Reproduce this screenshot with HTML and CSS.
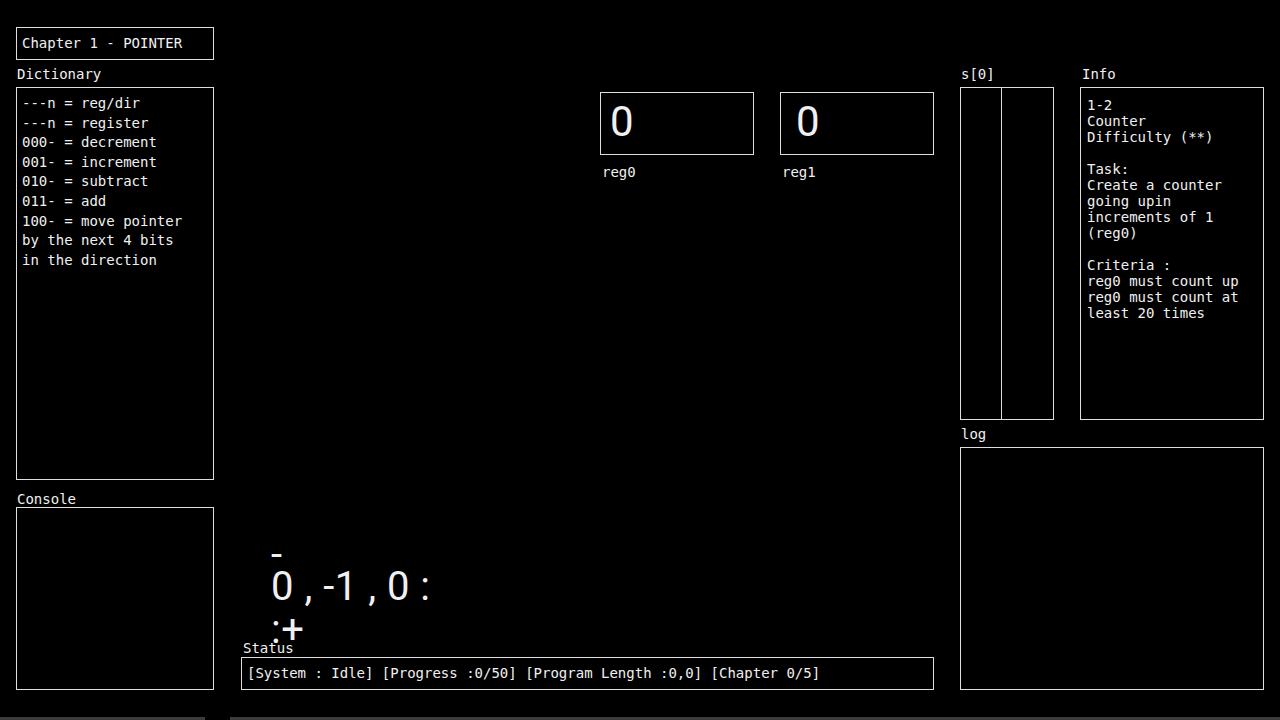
FILE: index.html
```html
<!DOCTYPE html>
<html>
<head>
<meta charset="utf-8">
<title>Chapter 1 - POINTER</title>
<link rel="stylesheet" href="styles.css">
</head>
<body>
<div class="screen">
  <div class="main">
    <section class="col col-left">
      <div class="box chapter">Chapter 1 - POINTER</div>
      <div class="label label-top">Dictionary</div>
      <div class="box dict">
        <div>---n = reg/dir</div>
        <div>---n = register</div>
        <div>000- = decrement</div>
        <div>001- = increment</div>
        <div>010- = subtract</div>
        <div>011- = add</div>
        <div>100- = move pointer</div>
        <div>by the next 4 bits</div>
        <div>in the direction</div>
      </div>
      <div class="label label-console">Console</div>
      <div class="box console"></div>
    </section>

    <section class="col col-mid">
      <div class="regs">
        <div class="reg">
          <div class="box reg-box"><span class="reg-value">0</span></div>
          <div class="reg-label">reg0</div>
        </div>
        <div class="reg">
          <div class="box reg-box reg-box-wide"><span class="reg-value">0</span></div>
          <div class="reg-label">reg1</div>
        </div>
      </div>
      <div class="spacer"></div>
      <div class="expr">
        <div class="expr-line expr-line-1">-</div>
        <div class="expr-line expr-line-2">0 , -1 , 0 :</div>
        <div class="expr-line expr-line-3">:+</div>
      </div>
      <div class="label label-status">Status</div>
      <div class="box status">[System : Idle] [Progress :0/50] [Program Length :0,0] [Chapter 0/5]</div>
    </section>

    <section class="col col-right">
      <div class="right-top">
        <div class="stack">
          <div class="label label-top">s[0]</div>
          <div class="box stack-box">
            <div class="stack-cell stack-cell-left"></div>
            <div class="stack-cell"></div>
          </div>
        </div>
        <div class="info">
          <div class="label label-top">Info</div>
          <div class="box info-box">1-2<br>Counter<br>Difficulty (**)<br><br>Task:<br>Create a counter<br>going upin<br>increments of 1<br>(reg0)<br><br>Criteria :<br>reg0 must count up<br>reg0 must count at<br>least 20 times</div>
        </div>
      </div>
      <div class="label label-top">log</div>
      <div class="box log"></div>
    </section>
  </div>
  <div class="taskbar">
    <div class="task task-a"></div>
    <div class="task-gap"></div>
    <div class="task task-b"></div>
  </div>
</div>
</body>
</html>
```

FILE: styles.css
```css
* { box-sizing: border-box; }

html, body {
  margin: 0;
  padding: 0;
  background: #000;
}

body {
  width: 1280px;
  height: 720px;
  overflow: hidden;
  color: #f0f0f0;
  font-family: "DejaVu Sans Mono", "Liberation Mono", monospace;
  font-size: 14px;
}

.screen {
  display: flex;
  flex-direction: column;
  height: 720px;
}

.main {
  display: flex;
  height: 717px;
  padding-left: 16px;
}

.col {
  display: flex;
  flex-direction: column;
}

.box {
  border: 1px solid #dedede;
}

/* left column */
.col-left {
  width: 198px;
  padding-top: 27px;
}

.chapter {
  height: 33px;
  line-height: 31px;
  padding-left: 5px;
}

.label {
  line-height: 16px;
  height: 27px;
  padding-left: 1px;
}

.label-top { padding-top: 6px; }
.label-console { padding-top: 11px; }

.dict {
  height: 393px;
  padding: 6px 0 0 5px;
  line-height: 19.6px;
}

.console {
  height: 183px;
}

/* middle column */
.col-mid {
  width: 693px;
  margin-left: 27px;
  padding-top: 92px;
  padding-bottom: 27px;
}

.regs {
  display: flex;
  gap: 26px;
  margin-left: 359px;
}

.reg {
  width: 154px;
}

.reg-box {
  height: 63px;
  padding: 8px 0 0 9px;
}

.reg-box-wide { padding-left: 15px; }

.reg-value {
  display: block;
  font-family: Roboto, "Noto Sans", sans-serif;
  font-size: 42px;
  line-height: 42px;
}

.reg-label {
  margin-top: 9px;
  padding-left: 2px;
  line-height: 16px;
}

.spacer { flex: 1; }

.expr {
  margin-left: 30px;
  font-family: Roboto, "Noto Sans", sans-serif;
  font-size: 40px;
  letter-spacing: 0.5px;
}

.expr-line {
  height: 40px;
  line-height: 40px;
  white-space: pre;
}

.expr-line-2 { margin-top: -8px; }
.expr-line-3 { margin-top: 3px; margin-bottom: -10px; }

.label-status {
  height: 17px;
  line-height: 17px;
  padding-left: 2px;
}

.status {
  height: 33px;
  line-height: 31px;
  padding-left: 5px;
  white-space: pre;
}

/* right column */
.col-right {
  width: 304px;
  margin-left: 26px;
  padding-top: 60px;
  padding-bottom: 27px;
}

.right-top {
  display: flex;
  gap: 26px;
}

.stack { width: 94px; }
.info { width: 184px; }

.info .label { padding-left: 2px; }

.stack-box {
  height: 333px;
  display: flex;
}

.stack-cell { flex: 1; }

.stack-cell-left {
  flex: 0 0 41px;
  border-right: 1px solid #dedede;
}

.info-box {
  height: 333px;
  padding: 9px 0 0 6px;
  line-height: 16px;
}

.log {
  flex: 1;
}

/* bottom strip */
.taskbar {
  height: 3px;
  display: flex;
  background: #000;
}

.task {
  background: #3c3c3c;
}

.task-a { width: 205px; }
.task-gap { width: 25px; }
.task-b { flex: 1; }
```
